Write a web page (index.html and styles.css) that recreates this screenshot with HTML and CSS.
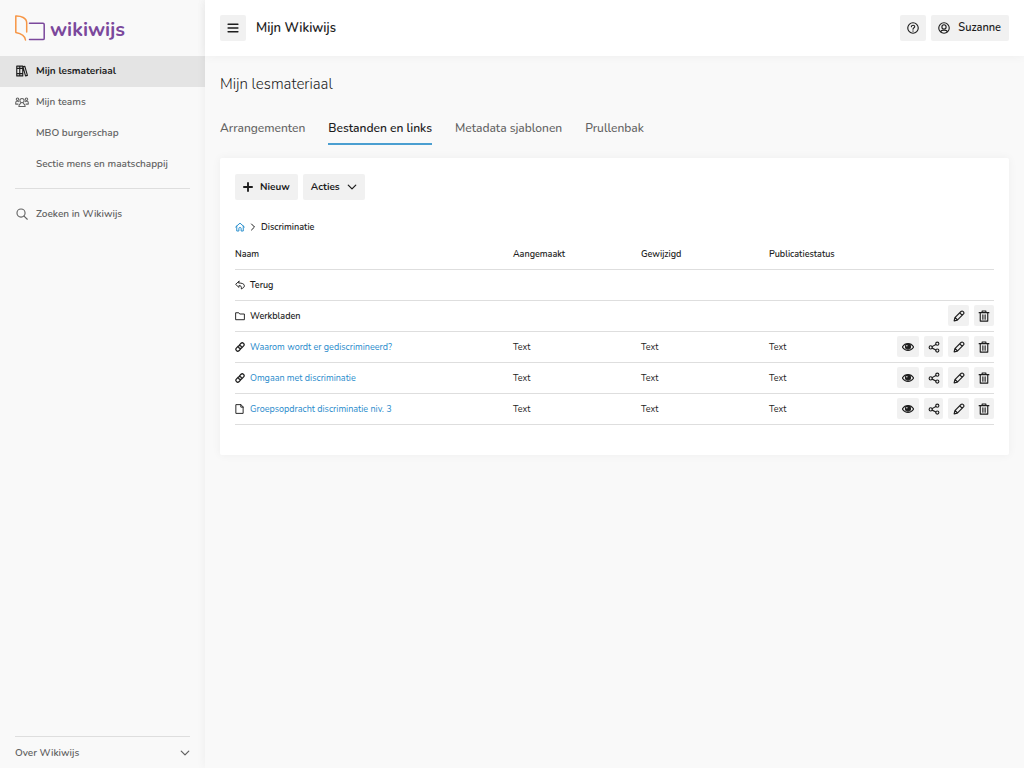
FILE: index.html
```html
<!DOCTYPE html>
<html lang="nl">
<head>
<meta charset="utf-8">
<meta name="viewport" content="width=device-width, initial-scale=1">
<title>Mijn Wikiwijs</title>
<link rel="stylesheet" href="styles.css">
</head>
<body>
<svg class="sprite" aria-hidden="true">
  <symbol id="eye" viewBox="0 0 16 16"><path d="M.5 8c3.700-6 11.300-6 15 0-3.700 6-11.300 6-15 0z"/><circle cx="8" cy="7.500" r="3.300" fill="currentColor"/><circle cx="6.500" cy="6.300" r=".9" fill="#fff" stroke="none"/></symbol>
  <symbol id="share" viewBox="0 0 16 16"><circle cx="3.600" cy="8.500" r="2.100"/><circle cx="12.400" cy="3.600" r="2.100"/><circle cx="12.400" cy="12.800" r="2.100"/><path d="M5.500 7.500l5-2.800M5.500 9.500l5 2.400"/></symbol>
  <symbol id="pencil" viewBox="0 0 16 16"><path d="M1.500 14.500l1-4.300L10.700 2c1.800-1.800 5 1.300 3.300 3.200l-8.200 8.300zM9 3.700l3.300 3.300M2.800 10l3.200 3.200"/></symbol>
  <symbol id="trash" viewBox="0 0 16 16"><path d="M1.500 3.500h13M5.500 3.300V1.300h5v2M3 3.700v11.100h10V3.700M6.500 6.300v6M9.500 6.300v6"/></symbol>
  <symbol id="link" viewBox="0 0 16 16"><path d="M7.200 4.600l2.500-2.500c2.600-2.500 6.600 1.500 4.100 4.100l-3.300 3.300c-1.600 1.500-4 .8-4.700-1M8.800 11.400l-2.500 2.500C3.700 16.400-.3 12.400 2.200 9.800l3.300-3.300c1.600-1.500 4-.8 4.700 1"/></symbol>
  <symbol id="file" viewBox="0 0 16 16"><path d="M2 1h7.500L13 4.700V15H2zM9.300 1v4H13"/></symbol>
  <symbol id="folder" viewBox="0 0 16 16"><path d="M1 13.300V2.800h5l1.500 2H15v8.500z"/></symbol>
  <symbol id="reply" viewBox="0 0 16 16"><path d="M6.300 2L1 7l5.300 4.800V9c3 0 4.500 1 3.800 5.300 2.200-1 4.900-2.500 4.900-5C15 6 11 4.800 6.300 4.800z"/></symbol>
  <symbol id="home" viewBox="0 0 16 16"><path d="M1 8l7-6.200L15 8M2.800 6.500v7.900h3.400v-4.200c0-2 3.600-2 3.600 0v4.200h3.400V6.500"/></symbol>
  <symbol id="right" viewBox="0 0 16 16"><path d="M5 2l6 6-6 6"/></symbol>
  <symbol id="down" viewBox="0 0 16 16"><path d="M2 5l6 6 6-6"/></symbol>
  <symbol id="plus" viewBox="0 0 16 16"><path d="M8 1.500v13M1.500 8h13"/></symbol>
  <symbol id="menu" viewBox="0 0 16 16"><path d="M1.500 3h13M1.500 8h13M1.500 13h13"/></symbol>
  <symbol id="help" viewBox="0 0 16 16"><circle cx="8" cy="8" r="7"/><path d="M5.800 6.300c.2-2.800 4.600-2.600 4.500 0C10.200 7.700 8 7.700 8 9.600M8 11.700v.5"/></symbol>
  <symbol id="user" viewBox="0 0 16 16"><circle cx="8" cy="8" r="7"/><circle cx="8" cy="6.500" r="2.800"/><path d="M3.500 13c.8-3 8.200-3 9 0"/></symbol>
  <symbol id="search" viewBox="0 0 16 16"><circle cx="6.700" cy="6.700" r="5.400"/><path d="M10.700 10.700l4.300 4.300"/></symbol>
  <symbol id="books" viewBox="0 0 16 16"><path d="M1 1.500h4v13H1zM5 1.500h4v13H5zM1 4.500h8M1 11.500h8M9.300 2.500l2.500-.7 3.400 12-2.500.7z"/></symbol>
  <symbol id="team" viewBox="0 0 20 16"><circle cx="10" cy="6" r="3"/><path d="M5.500 14.500c0-2.500 1-4 2.500-4.500M14.500 14.500c0-2.500-1-4-2.500-4.500M5.500 14.500h9"/><circle cx="3.600" cy="4" r="1.800"/><circle cx="16.400" cy="4" r="1.800"/><path d="M1 11V9c0-1.500 1-2.300 2.600-2.300L5 7.500M1 11h3.300M19 11V9c0-1.500-1-2.300-2.600-2.300L15 7.500M19 11h-3.300"/></symbol>
</svg>
<div class="app">
  <aside class="sidebar">
    <a class="logo" href="#">
      <svg class="logo-mark" viewBox="0 0 32 28" aria-hidden="true"><path class="logo-orange" d="M1.800 18.500V2C7 1.800 12.700 3.800 12.700 9v9M1.800 18.500C7.500 19.500 11 21.500 11.500 26"/><path class="logo-purple" d="M15.500 9.200H29c.8 0 1.200.4 1.200 1.200v14c0 .8-.4 1.200-1.200 1.200H15.500"/></svg>
      <span class="logo-text">wikiwijs</span>
    </a>
    <nav class="nav">
      <a class="nav-item active" href="#"><svg class="icon"><use href="#books"/></svg>Mijn lesmateriaal</a>
      <a class="nav-item" href="#"><svg class="icon team"><use href="#team"/></svg>Mijn teams</a>
      <a class="nav-item sub" href="#">MBO burgerschap</a>
      <a class="nav-item sub" href="#">Sectie mens en maatschappij</a>
      <hr class="rule">
      <a class="nav-item" href="#"><svg class="icon"><use href="#search"/></svg>Zoeken in Wikiwijs</a>
    </nav>
    <div class="side-foot">
      <button class="about" type="button">Over Wikiwijs<svg class="icon small bold"><use href="#down"/></svg></button>
    </div>
  </aside>
  <div class="main">
    <header class="topbar">
      <button class="btn square" type="button" aria-label="Menu"><svg class="icon bold"><use href="#menu"/></svg></button>
      <span class="site">Mijn Wikiwijs</span>
      <button class="btn square" type="button" aria-label="Help"><svg class="icon"><use href="#help"/></svg></button>
      <button class="btn account" type="button"><svg class="icon"><use href="#user"/></svg>Suzanne</button>
    </header>
    <main class="content">
      <h1 class="title">Mijn lesmateriaal</h1>
      <nav class="tabs">
        <a class="tab" href="#">Arrangementen</a>
        <a class="tab current" href="#">Bestanden en links</a>
        <a class="tab" href="#">Metadata sjablonen</a>
        <a class="tab" href="#">Prullenbak</a>
      </nav>
      <section class="card">
        <div class="toolbar">
          <button class="btn" type="button"><svg class="icon small heavy"><use href="#plus"/></svg>Nieuw</button>
          <button class="btn" type="button">Acties<svg class="icon small bold"><use href="#down"/></svg></button>
        </div>
        <nav class="crumbs">
          <a class="home" href="#" aria-label="Home"><svg class="icon small"><use href="#home"/></svg></a>
          <svg class="icon tiny bold"><use href="#right"/></svg>
          <span>Discriminatie</span>
        </nav>
        <table class="files">
          <thead><tr><th>Naam</th><th class="c-date">Aangemaakt</th><th class="c-date">Gewijzigd</th><th class="c-date">Publicatiestatus</th><th class="c-act" aria-label="Bewerkingen"></th></tr></thead>
          <tbody>
            <tr><td class="strong"><a class="entry" href="#"><svg class="icon small"><use href="#reply"/></svg>Terug</a></td><td></td><td></td><td></td><td></td></tr>
            <tr><td class="strong"><a class="entry" href="#"><svg class="icon small"><use href="#folder"/></svg>Werkbladen</a></td><td></td><td></td><td></td>
              <td><div class="actions"><button class="act mid" type="button" aria-label="Bewerken"><svg class="icon"><use href="#pencil"/></svg></button><button class="act" type="button" aria-label="Verwijderen"><svg class="icon"><use href="#trash"/></svg></button></div></td></tr>
            <tr><td><a class="entry" href="#"><svg class="icon small bold"><use href="#link"/></svg><span class="blue">Waarom wordt er gediscrimineerd?</span></a></td><td>Text</td><td>Text</td><td>Text</td>
              <td><div class="actions"><button class="act wide" type="button" aria-label="Bekijken"><svg class="icon"><use href="#eye"/></svg></button><button class="act" type="button" aria-label="Delen"><svg class="icon"><use href="#share"/></svg></button><button class="act mid" type="button" aria-label="Bewerken"><svg class="icon"><use href="#pencil"/></svg></button><button class="act" type="button" aria-label="Verwijderen"><svg class="icon"><use href="#trash"/></svg></button></div></td></tr>
            <tr><td><a class="entry" href="#"><svg class="icon small bold"><use href="#link"/></svg><span class="blue">Omgaan met discriminatie</span></a></td><td>Text</td><td>Text</td><td>Text</td>
              <td><div class="actions"><button class="act wide" type="button" aria-label="Bekijken"><svg class="icon"><use href="#eye"/></svg></button><button class="act" type="button" aria-label="Delen"><svg class="icon"><use href="#share"/></svg></button><button class="act mid" type="button" aria-label="Bewerken"><svg class="icon"><use href="#pencil"/></svg></button><button class="act" type="button" aria-label="Verwijderen"><svg class="icon"><use href="#trash"/></svg></button></div></td></tr>
            <tr><td><a class="entry" href="#"><svg class="icon small"><use href="#file"/></svg><span class="blue">Groepsopdracht discriminatie niv. 3</span></a></td><td>Text</td><td>Text</td><td>Text</td>
              <td><div class="actions"><button class="act wide" type="button" aria-label="Bekijken"><svg class="icon"><use href="#eye"/></svg></button><button class="act" type="button" aria-label="Delen"><svg class="icon"><use href="#share"/></svg></button><button class="act mid" type="button" aria-label="Bewerken"><svg class="icon"><use href="#pencil"/></svg></button><button class="act" type="button" aria-label="Verwijderen"><svg class="icon"><use href="#trash"/></svg></button></div></td></tr>
          </tbody>
        </table>
      </section>
    </main>
  </div>
</div>
</body>
</html>
```
FILE: styles.css
```css
* { box-sizing: border-box; }
body {
  margin: 0;
  font-family: Nunito, Lato, "Open Sans", sans-serif;
  font-size: 10px;
  line-height: 16px;
  color: #1d1d1d;
  background: #f9f9f9;
}
a { color: inherit; text-decoration: none; }
button { font: inherit; color: inherit; border: 0; cursor: pointer; }
.sprite { display: none; }
.icon {
  flex: none;
  width: 12px;
  height: 12px;
  fill: none;
  stroke: currentColor;
  stroke-width: 1.5;
  stroke-linecap: round;
  stroke-linejoin: round;
}
.small { width: 10px; height: 10px; }
.tiny { width: 8px; height: 8px; }
.team { width: 14px; margin: 0 -1px; }
.bold { stroke-width: 2; }
.heavy { stroke-width: 3; }

.app { display: flex; min-height: 100vh; }
.sidebar {
  flex: none;
  width: 205px;
  display: flex;
  flex-direction: column;
}
.logo {
  display: flex;
  align-items: center;
  height: 56px;
  padding-left: 14px;
  gap: 4px;
  color: #7b489c;
}
.logo-text { padding-top: 4px; font-size: 20px; line-height: 28px; font-weight: 700; }
.logo-mark { width: 32px; height: 28px; fill: none; stroke-width: 1.5; stroke-linejoin: round; stroke-linecap: round; }
.logo-orange { stroke: #f79646; }
.logo-purple { stroke: #7b489c; }
.nav { flex: 1; color: #626262; }
.nav-item {
  display: flex;
  align-items: center;
  gap: 8px;
  height: 31px;
  padding: 0 0 1px 16px;
  font-weight: 600;
}
.active { background: #e4e4e4; color: #1d1d1d; font-weight: 700; }
.sub { padding-left: 36px; }
.rule { margin: 8px 15px 10px; border: 0; border-top: 1px solid #dedede; }
.side-foot { margin: 0 15px; border-top: 1px solid #dedede; color: #626262; }
.about {
  display: flex;
  align-items: center;
  justify-content: space-between;
  width: 100%;
  height: 31px;
  padding: 0;
  background: none;
  font-weight: 600;
}

.main { flex: 1; min-width: 0; box-shadow: 0 0 10px rgba(0, 0, 0, .05); }
.topbar {
  display: flex;
  align-items: center;
  gap: 5px;
  height: 56px;
  padding: 0 15px;
  background: #fff;
  box-shadow: 0 0 10px rgba(0, 0, 0, .05);
}
.site { flex: 1; padding-left: 5px; font-size: 13px; font-weight: 600; }
.btn {
  display: flex;
  align-items: center;
  gap: 7px;
  height: 26px;
  padding: 0 8px;
  border-radius: 2px;
  background: #f1f1f1;
  font-weight: 700;
}
.square { padding: 0 7px; }
.account { padding: 0 8px 0 7px; gap: 8px; font-size: 11px; font-weight: 600; }
.content { padding: 18px 15px; }
.title { margin: 0; font-size: 15px; line-height: 20px; font-weight: 300; }
.tabs { display: flex; gap: 23px; margin-top: 24px; font-size: 12px; color: #626262; }
.tab { padding-bottom: 5px; border-bottom: 2px solid transparent; font-weight: 500; line-height: 20px; }
.current { border-color: #4b9fd1; color: #1d1d1d; font-weight: 600; }
.card {
  margin-top: 13px;
  padding: 16px 15px 30px;
  border-radius: 2px;
  background: #fff;
  box-shadow: 0 0 10px rgba(0, 0, 0, .05);
}
.toolbar { display: flex; gap: 5px; }
.crumbs { display: flex; align-items: center; gap: 4px; margin-top: 19px; font-size: 9px; font-weight: 600; }
.home { display: flex; color: #1f8acb; }

.files { width: 100%; margin-top: 4px; table-layout: fixed; border-collapse: collapse; font-size: 9px; }
.files th, .files td { height: 31px; padding: 0; border-bottom: 1px solid #dedede; text-align: left; }
.files th { height: 30px; font-weight: 600; }
.files td { font-weight: 400; }
.c-date { width: 128px; }
.c-act { width: 97px; }
.files .strong { font-weight: 600; }
.entry { display: flex; align-items: center; gap: 5px; }
.blue { color: #1f8acb; }
.actions { display: flex; justify-content: flex-end; gap: 5px; }
.act {
  display: flex;
  align-items: center;
  justify-content: center;
  width: 20px;
  height: 21px;
  padding: 0;
  border-radius: 2px;
  background: #f1f1f1;
}
.mid { width: 21px; }
.wide { width: 22px; }
```
